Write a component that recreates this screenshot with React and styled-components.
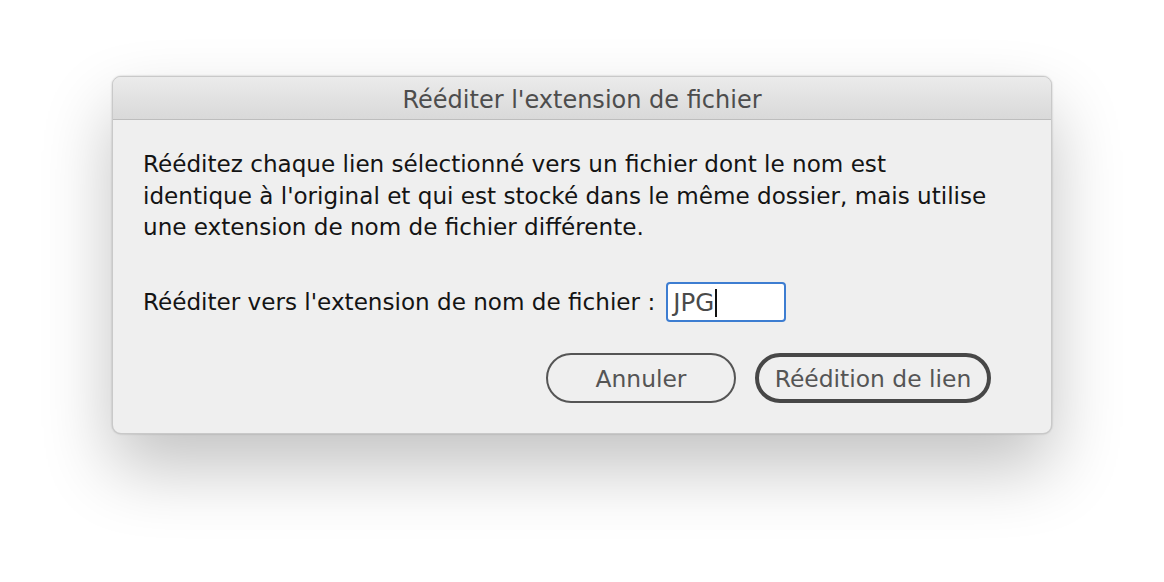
import React from 'react'
import styled, { createGlobalStyle } from 'styled-components'

const Global = createGlobalStyle`
  html, body { margin: 0; padding: 0; background: #ffffff; }
  body { font-family: "DejaVu Sans", "Liberation Sans", sans-serif; }
`

const Page = styled.div`
  width: 1164px;
  height: 582px;
  display: flex;
  justify-content: center;
  align-items: flex-start;
  padding-top: 76px;
  box-sizing: border-box;
  overflow: hidden;
`

const Dialog = styled.div`
  width: 940px;
  height: 358px;
  background: #efefef;
  border: 1px solid #c9c9c9;
  border-radius: 9px;
  box-shadow: 0 34px 70px rgba(0, 0, 0, 0.24), 0 0 2px rgba(0, 0, 0, 0.25);
  display: flex;
  flex-direction: column;
  overflow: hidden;
  box-sizing: border-box;
`

const TitleBar = styled.div`
  height: 43px;
  flex: none;
  box-sizing: border-box;
  display: flex;
  align-items: center;
  justify-content: center;
  padding-top: 3px;
  background: linear-gradient(#ebebeb, #d9d9d9);
  border-bottom: 1px solid #bdbdbd;
  color: #4d4d4d;
  font-size: 24px;
`

const Body = styled.div`
  padding: 29px 30px 0 30px;
  display: flex;
  flex-direction: column;
`

const Paragraph = styled.p`
  margin: 0;
  font-size: 23.1px;
  line-height: 31.5px;
  color: #141414;
  white-space: nowrap;
`

const FieldRow = styled.div`
  margin-top: 38px;
  display: flex;
  align-items: center;
  gap: 11px;
  font-size: 23.1px;
  color: #141414;
`

const Input = styled.div`
  width: 120px;
  height: 40px;
  box-sizing: border-box;
  border: 2px solid #3d7dd1;
  border-radius: 4px;
  background: #fff;
  display: flex;
  align-items: center;
  padding-left: 5px;
  padding-top: 2px;
  font-size: 24.5px;
  color: #4a4a4a;
`

const Caret = styled.span`
  display: inline-block;
  width: 1.5px;
  height: 28px;
  background: #111;
  margin-left: 1px;
`

const Buttons = styled.div`
  margin-top: 31px;
  display: flex;
  justify-content: flex-end;
  gap: 19px;
  padding-right: 60px;
`

const Button = styled.div`
  height: 50px;
  width: ${p => p.$w}px;
  box-sizing: border-box;
  border: ${p => (p.$primary ? '4px solid #474747' : '2px solid #555')};
  border-radius: 25px;
  display: flex;
  align-items: center;
  justify-content: center;
  padding-top: 3px;
  font-size: 23.4px;
  color: #555;
  background: #efefef;
`

export default function App() {
  return (
    <Page>
      <Global />
      <Dialog>
        <TitleBar>Rééditer l'extension de fichier</TitleBar>
        <Body>
          <Paragraph>
            Rééditez chaque lien sélectionné vers un fichier dont le nom est<br />
            identique à l'original et qui est stocké dans le même dossier, mais utilise<br />
            une extension de nom de fichier différente.
          </Paragraph>
          <FieldRow>
            Rééditer vers l'extension de nom de fichier :
            <Input>JPG<Caret /></Input>
          </FieldRow>
        </Body>
        <Buttons>
          <Button $w={190}>Annuler</Button>
          <Button $w={236} $primary>Réédition de lien</Button>
        </Buttons>
      </Dialog>
    </Page>
  )
}
